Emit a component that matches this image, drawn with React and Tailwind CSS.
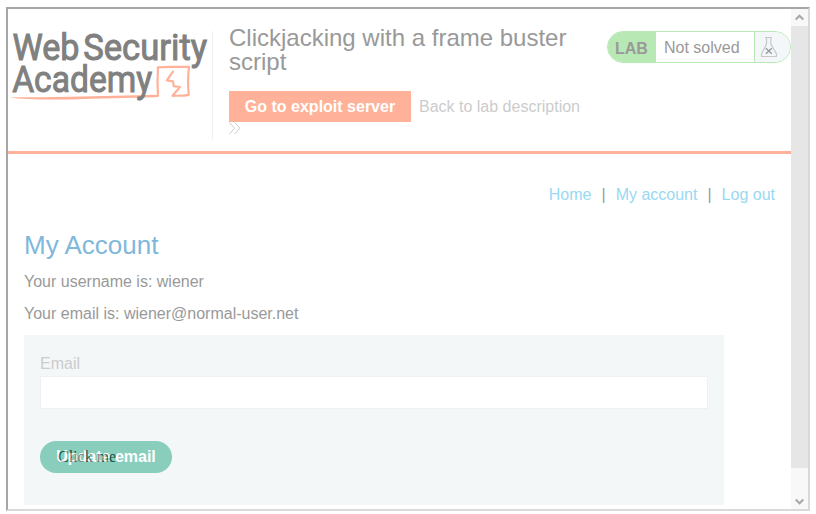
function Logo() {
  return (
    <svg width="204" height="80" viewBox="0 0 204 80" className="shrink-0" role="img" aria-label="Web Security Academy">
      <path d="M1 71.2C20 71 42 71.4 62 70.8C92 70 122 69.6 148 68.8V71.2C120 71.8 92 72.6 62 73.4C40 73.8 14 73.6 1 71.2Z" fill="#ffb299" />
      <g fill="none" stroke="#ffb299" strokeWidth="2.2" strokeLinecap="round" strokeLinejoin="round">
        <path d="M147 70L150 69.8C149.4 60 149.4 51 149.9 41.3C160 40.2 171 41.2 181 40.8C179.8 50 180 61 180.7 68.8C175 70 169 69.6 164.5 69.8L172 61L165.8 60.2L165 55.4L158.8 54.4L165 45.6" />
      </g>
      <g fill="#808080" stroke="#808080" strokeWidth="1" fontFamily="Roboto, sans-serif" fontWeight="400" fontSize="37">
        <text x="4.5" y="34" textLength="67" lengthAdjust="spacingAndGlyphs">Web</text>
        <text x="75.2" y="34" textLength="124" lengthAdjust="spacingAndGlyphs">Security</text>
        <text x="4.2" y="66" textLength="140" lengthAdjust="spacingAndGlyphs">Academy</text>
      </g>
    </svg>
  );
}

function Flask() {
  return (
    <svg width="18" height="22" viewBox="0 0 18 22" fill="none" stroke="#c6c8c9" strokeWidth="1.2">
      <path d="M5 1.5H12M6.5 1.5V8L1.5 18V20.5H16.5V18L10.8 8V1.5" />
      <path d="M5.8 12.2L11.8 17.8M11.8 12.2L5.8 17.8" stroke="#999999" strokeWidth="1.4" />
    </svg>
  );
}

function Header() {
  return (
    <header className="flex h-[145px] shrink-0 border-b-[3px] border-[#ffb299] pt-[22px]">
      <div className="h-[109px] w-[205px] shrink-0 border-r border-[#f1f1f1]">
        <div className="-mt-[5px]"><Logo /></div>
      </div>
      <div className="ml-4 w-[378px] shrink-0">
        <h2 className="-mt-[5px] text-[24px] leading-6 text-[#999999]">Clickjacking with a frame buster<br />script</h2>
        <div className="mt-[17px] flex h-[31px] items-center">
          <a className="h-[31px] w-[182px] bg-[#ffb299] text-center font-bold leading-[31px] text-white">Go to exploit server</a>
          <a className="ml-2 whitespace-nowrap text-[#cccccc]">Back to lab description</a>
        </div>
        <svg width="12" height="13" viewBox="0 0 12 13" fill="none" stroke="#cccccc" strokeWidth="1">
          <path d="M0.5 0.5L5.5 6.2L0.5 12M5.8 0.5L10.8 6.2L5.8 12" />
        </svg>
      </div>
      <div className="flex h-8 w-[184px] shrink-0 overflow-hidden rounded-full border border-[#b8e8b4] text-[#999999]">
        <span className="w-12 bg-[#b8e8b4] pl-[7px] pt-px font-bold leading-[31px]">LAB</span>
        <span className="w-[98px] pl-2 leading-[31px]">Not solved</span>
        <span className="flex flex-1 border-l border-[#b8e8b4] bg-[#f3f7f9] pl-[5px] pt-[4px]"><Flask /></span>
      </div>
    </header>
  );
}

function Scrollbar() {
  return (
    <div className="flex w-[17px] shrink-0 flex-col bg-[#f8f8f8]">
      <div className="flex h-[17px] items-center justify-center">
        <svg width="9" height="7" viewBox="0 0 9 7" fill="none" stroke="#a8a8a8" strokeWidth="2.2"><path d="M0.7 5.5L4.5 1.8L8.3 5.5" /></svg>
      </div>
      <div className="h-[442px] bg-[#e6e6e6]" />
      <div className="mt-auto flex h-[17px] items-center justify-center pt-px">
        <svg width="9" height="7" viewBox="0 0 9 7" fill="none" stroke="#a8a8a8" strokeWidth="2.2"><path d="M0.7 1.5L4.5 5.2L8.3 1.5" /></svg>
      </div>
    </div>
  );
}

export default function App() {
  return (
    <div className="h-[514px] w-[816px] overflow-hidden bg-white pl-[6px] pt-[7px] font-['Liberation_Sans',Arial,sans-serif] text-[16px]">
      <div className="flex h-[504px] w-[804px] border-2 border-b-[#d9d9d9] border-l-[#a6a6a6] border-r-[#d9d9d9] border-t-[#a6a6a6]">
        <div className="flex w-[783px] flex-col overflow-hidden">
          <Header />
          <main className="px-4 text-[#999999]">
            <nav className="mt-[31px] flex h-5 justify-end leading-5">
              <a className="text-[#99d9f1]">Home</a>
              <span className="mx-[10px]">|</span>
              <a className="text-[#99d9f1]">My account</a>
              <span className="mx-[10px]">|</span>
              <a className="text-[#99d9f1]">Log out</a>
            </nav>
            <h1 className="mt-6 text-[26px] leading-8 text-[#80b8dc]">My Account</h1>
            <p className="mt-[11px] leading-5">Your username is: wiener</p>
            <p className="mt-3 leading-5">Your email is: wiener@normal-user.net</p>
            <form className="mt-[11px] flex h-[170px] w-[700px] flex-col bg-[#f3f7f8] px-4 pt-[19px]">
              <label className="leading-5 text-[#cccccc]">Email</label>
              <input className="mt-[2px] h-[33px] w-[668px] border border-[#f0f0f0] bg-white px-2" />
              <div className="relative mt-8 h-8 w-[132px] rounded-full bg-white">
                <span className="absolute left-[18px] top-[7px] font-['Liberation_Serif','Times_New_Roman',serif] leading-[18px] text-black">Click me</span>
                <button type="button" className="relative h-8 w-[132px] rounded-full bg-[#159d7b] font-bold text-white opacity-50">Update email</button>
              </div>
            </form>
          </main>
        </div>
        <Scrollbar />
      </div>
    </div>
  );
}
